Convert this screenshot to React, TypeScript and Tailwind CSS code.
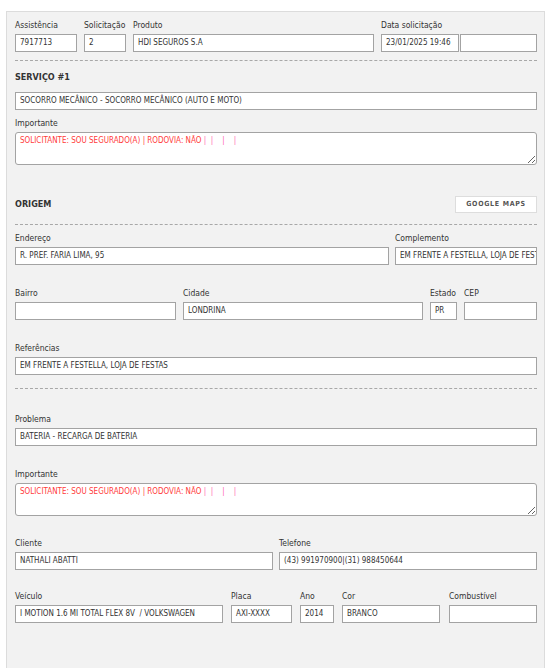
import React from "react";

const font = { fontFamily: '"DejaVu Sans Condensed", "DejaVu Sans", Tahoma, sans-serif' };

function Field({
  label,
  value,
  className = "",
}: {
  label?: string;
  value?: string;
  className?: string;
}) {
  return (
    <div className={"flex flex-col " + className}>
      <div className="h-[12px] leading-[12px] mb-[3px] text-[8.5px] text-[#333] whitespace-nowrap">
        {label ?? "\u00a0"}
      </div>
      <div className="h-[18px] border border-[#a3a3a3] bg-white px-[4px] flex items-center text-[8px] text-[#333] overflow-hidden whitespace-pre">
        {value}
      </div>
    </div>
  );
}

function TextBox({ label }: { label: string }) {
  return (
    <div className="flex flex-col">
      <div className="h-[12px] leading-[12px] mb-[3px] text-[8.5px] text-[#333]">{label}</div>
      <div className="h-[33px] border border-[#a3a3a3] rounded-[3px] bg-white px-[4px] pt-[2px] text-[8px] leading-[12px] whitespace-pre resize overflow-auto">
        <span className="text-[#ff3b3b]">SOLICITANTE: SOU SEGURADO(A) | RODOVIA: NÃO </span>
        <span className="text-[#ff5fb0]">|  |    |    |</span>
      </div>
    </div>
  );
}

function Dashed({ className = "" }: { className?: string }) {
  return <div className={"border-t border-dashed border-[#a8a8a8] " + className} />;
}

export default function App() {
  return (
    <div className="min-h-[668px] bg-white pt-[11px]" style={font}>
      <div className="ml-[6px] w-[539px] min-h-[657px] bg-[#f2f2f2] border-l border-r border-t border-[#dcdcdc] pl-[8px] pr-[7px] pt-[7px]">
        {/* Row 1 */}
        <div className="flex">
          <Field label="Assistência" value="7917713" className="w-[62px] shrink-0" />
          <Field label="Solicitação" value="2" className="w-[42px] ml-[7px] shrink-0" />
          <Field label="Produto" value="HDI SEGUROS S.A" className="w-[241px] ml-[7px] shrink-0" />
          <Field label="Data solicitação" value="23/01/2025 19:46" className="w-[78px] ml-[7px] shrink-0" />
          <Field value="" className="flex-1 min-w-0 ml-px" />
        </div>

        <Dashed className="mt-[8px]" />

        <div className="mt-[10px] h-[12px] leading-[12px] text-[9px] font-bold text-[#333]">SERVIÇO #1</div>

        <div className="mt-[9px] h-[18px] border border-[#a3a3a3] bg-white px-[4px] flex items-center text-[8px] text-[#333]">
          SOCORRO MECÂNICO - SOCORRO MECÂNICO (AUTO E MOTO)
        </div>

        <div className="mt-[7px]">
          <TextBox label="Importante" />
        </div>

        <div className="mt-[31px] h-[17px] flex items-center justify-between">
          <div className="text-[9px] font-bold text-[#333]">ORIGEM</div>
          <div className="w-[82px] h-[17px] bg-white border border-[#dddddd] flex items-center justify-center text-[7px] font-bold tracking-[0.7px] text-[#555]">
            GOOGLE MAPS
          </div>
        </div>

        <Dashed className="mt-[11px]" />

        <div className="mt-[7px] flex">
          <Field label="Endereço" value="R. PREF. FARIA LIMA, 95" className="w-[374px] shrink-0" />
          <Field label="Complemento" value="EM FRENTE A FESTELLA, LOJA DE FESTAS" className="flex-1 min-w-0 ml-[6px]" />
        </div>

        <div className="mt-[22px] flex">
          <Field label="Bairro" value="" className="w-[161px] shrink-0" />
          <Field label="Cidade" value="LONDRINA" className="w-[240px] ml-[7px] shrink-0" />
          <Field label="Estado" value="PR" className="w-[27px] ml-[7px] shrink-0" />
          <Field label="CEP" value="" className="flex-1 min-w-0 ml-[7px]" />
        </div>

        <div className="mt-[22px]">
          <Field label="Referências" value="EM FRENTE A FESTELLA, LOJA DE FESTAS" />
        </div>

        <Dashed className="mt-[13px]" />

        <div className="mt-[24px]">
          <Field label="Problema" value="BATERIA - RECARGA DE BATERIA" />
        </div>

        <div className="mt-[22px]">
          <TextBox label="Importante" />
        </div>

        <div className="mt-[21px] flex">
          <Field label="Cliente" value="NATHALI ABATTI" className="w-[258px] shrink-0" />
          <Field label="Telefone" value="(43) 991970900|(31) 988450644" className="flex-1 min-w-0 ml-[6px]" />
        </div>

        <div className="mt-[20px] flex">
          <Field label="Veículo" value="I MOTION 1.6 MI TOTAL FLEX 8V  / VOLKSWAGEN" className="w-[208px] shrink-0" />
          <Field label="Placa" value="AXI-XXXX" className="w-[61px] ml-[8px] shrink-0" />
          <Field label="Ano" value="2014" className="w-[34px] ml-[8px] shrink-0" />
          <Field label="Cor" value="BRANCO" className="w-[98px] ml-[8px] shrink-0" />
          <Field label="Combustível" value="" className="flex-1 min-w-0 ml-[9px]" />
        </div>
      </div>
    </div>
  );
}
